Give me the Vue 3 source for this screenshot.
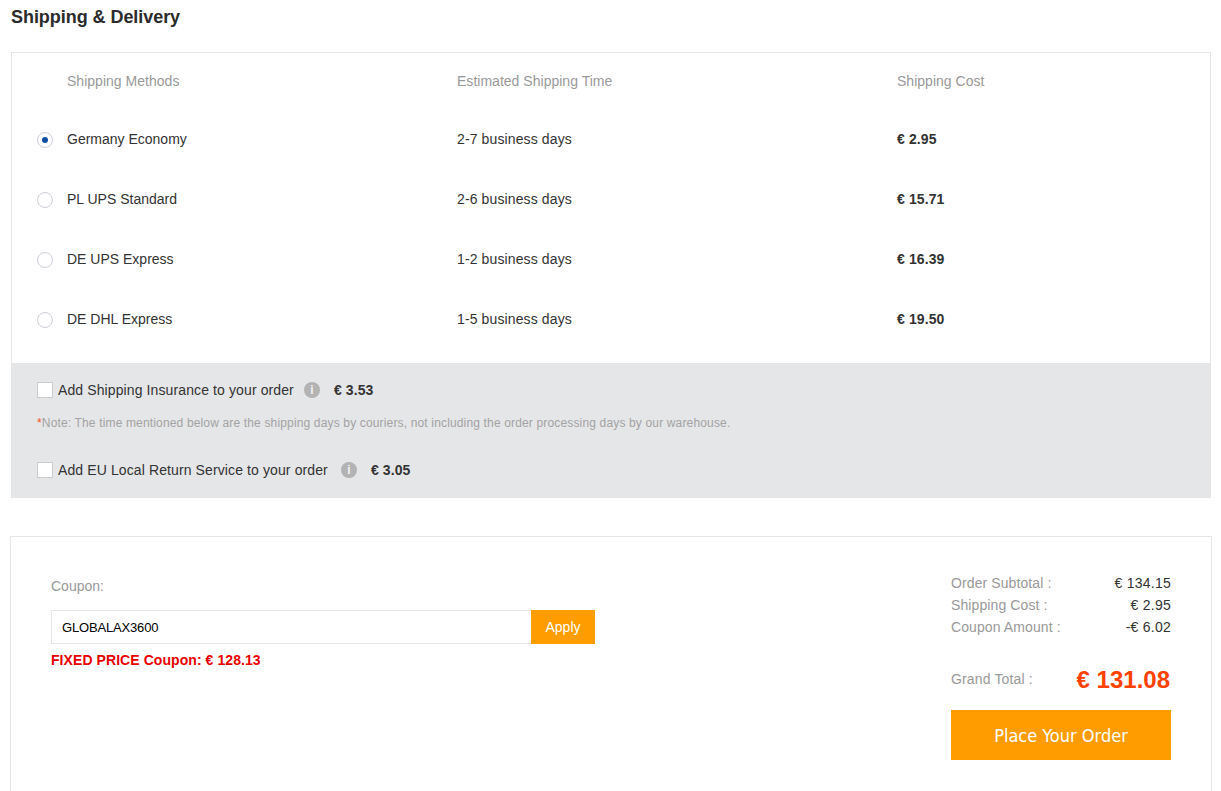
<script setup>
const methods = [
  { name: 'Germany Economy', time: '2-7 business days', cost: '€ 2.95', on: true },
  { name: 'PL UPS Standard', time: '2-6 business days', cost: '€ 15.71' },
  { name: 'DE UPS Express', time: '1-2 business days', cost: '€ 16.39' },
  { name: 'DE DHL Express', time: '1-5 business days', cost: '€ 19.50' }
]
const totals = [
  ['Order Subtotal :', '€ 134.15'],
  ['Shipping Cost :', '€ 2.95'],
  ['Coupon Amount :', '-€ 6.02']
]
</script>

<template>
  <div class="page">
    <h2 class="title">Shipping &amp; Delivery</h2>
    <section class="shipping">
      <div class="grid head">
        <span>Shipping Methods</span>
        <span>Estimated Shipping Time</span>
        <span>Shipping Cost</span>
      </div>
      <div v-for="m in methods" :key="m.name" class="grid row">
        <span class="method"><i class="radio" :class="{ on: m.on }"></i>{{ m.name }}</span>
        <span class="time">{{ m.time }}</span>
        <b>{{ m.cost }}</b>
      </div>
      <div class="extras">
        <div class="extra">
          <i class="check"></i><span>Add Shipping Insurance to your order</span>
          <i class="info">i</i><b>€ 3.53</b>
        </div>
        <p class="note"><em>*</em>Note: The time mentioned below are the shipping days by couriers, not including the order processing days by our warehouse.</p>
        <div class="extra wide">
          <i class="check"></i><span>Add EU Local Return Service to your order</span>
          <i class="info">i</i><b>€ 3.05</b>
        </div>
      </div>
    </section>
    <section class="summary">
      <div class="coupon">
        <div class="label">Coupon:</div>
        <div class="field">
          <input class="input" value="GLOBALAX3600" />
          <button class="apply">Apply</button>
        </div>
        <div class="fixed">FIXED PRICE Coupon: € 128.13</div>
      </div>
      <div class="totals">
        <div v-for="t in totals" :key="t[0]" class="line"><span>{{ t[0] }}</span><span class="val">{{ t[1] }}</span></div>
        <div class="grand"><span>Grand Total :</span><b>€ 131.08</b></div>
        <button class="order">Place Your Order</button>
      </div>
    </section>
  </div>
</template>

<style>
html, body { margin: 0; background: #fff; overflow: hidden; }
</style>

<style scoped>
.page { width: 1221px; height: 791px; overflow: hidden; box-sizing: border-box; font: 14px/20px "Liberation Sans", Arial, sans-serif; color: #333; }
.title { margin: 0; padding: 7px 0 0 11px; height: 52px; box-sizing: border-box; font-size: 18px; line-height: 20px; font-weight: 700; color: #2b2b2b; letter-spacing: -0.05px; }
.shipping { margin-left: 11px; width: 1200px; height: 446px; box-sizing: border-box; border: 1px solid #e6e6e6; border-bottom: 0; display: flex; flex-direction: column; }
.grid { display: grid; grid-template-columns: 390px 440px 1fr; padding-left: 55px; }
.head { height: 56px; padding-top: 18px; box-sizing: border-box; color: #999; letter-spacing: 0.02px; }
.row { height: 60px; align-items: center; }
.row b { font-weight: 700; letter-spacing: 0.1px; }
.time { letter-spacing: 0.12px; }
.method { position: relative; }
.radio { position: absolute; left: -30px; top: 3px; width: 16px; height: 16px; box-sizing: border-box; border: 1px solid #ccd1d9; border-radius: 50%; background: #fff; }
.radio.on::after { content: ""; position: absolute; left: 4px; top: 4px; width: 6px; height: 6px; border-radius: 50%; background: #0b4fa3; }
.extras { margin: 14px -1px 0; flex: 1; background: #e5e6e8; padding: 17px 26px 0; }
.extra { display: flex; align-items: center; height: 20px; letter-spacing: 0.11px; }
.check { width: 16px; height: 16px; box-sizing: border-box; border: 1px solid #ccc; background: #fff; margin-right: 5px; }
.info { width: 16px; height: 16px; margin: 0 14px 0 10px; border-radius: 50%; background: #b3b3b3; color: #f2f2f2; font: 700 12px/16px "Liberation Sans", Arial, sans-serif; text-align: center; }
.wide .info { margin-left: 13px; }
.note { margin: 13px 0 27px; font-size: 12px; line-height: 20px; color: #a3a3a3; letter-spacing: 0.155px; }
.note em { color: #f4511e; font-style: normal; }
.summary { margin: 38px 0 0 10px; width: 1202px; height: 300px; box-sizing: border-box; border: 1px solid #e6e6e6; padding: 39px 40px 0; display: flex; justify-content: space-between; }
.coupon { width: 544px; }
.label { color: #999; }
.field { display: flex; margin-top: 14px; height: 34px; }
.input { flex: 1; min-width: 0; box-sizing: border-box; border: 1px solid #e6e6e6; border-right: 0; padding: 0 10px; font: 13px "Liberation Sans", Arial, sans-serif; letter-spacing: -0.17px; color: #000; outline: none; }
.apply { width: 64px; border: 0; padding: 0; background: #ff9c00; color: #fff; font: 14px "Liberation Sans", Arial, sans-serif; }
.fixed { margin-top: 6px; color: #e60000; font-weight: 700; letter-spacing: 0.07px; }
.totals { width: 220px; margin-top: -4px; }
.line { display: flex; justify-content: space-between; height: 22px; line-height: 22px; color: #999; letter-spacing: 0.1px; }
.val { color: #333; letter-spacing: 0.25px; }
.grand { display: flex; justify-content: space-between; align-items: center; margin-top: 21px; height: 40px; color: #999; letter-spacing: 0.15px; }
.grand b { font-size: 24px; line-height: 28px; padding: 2px 1px 0 0; color: #ff4200; letter-spacing: 0; }
.order { display: block; width: 220px; height: 50px; margin-top: 11px; border: 0; background: #ff9c00; color: #fff; font: 18px "DejaVu Sans Condensed", Tahoma, sans-serif; }
</style>
